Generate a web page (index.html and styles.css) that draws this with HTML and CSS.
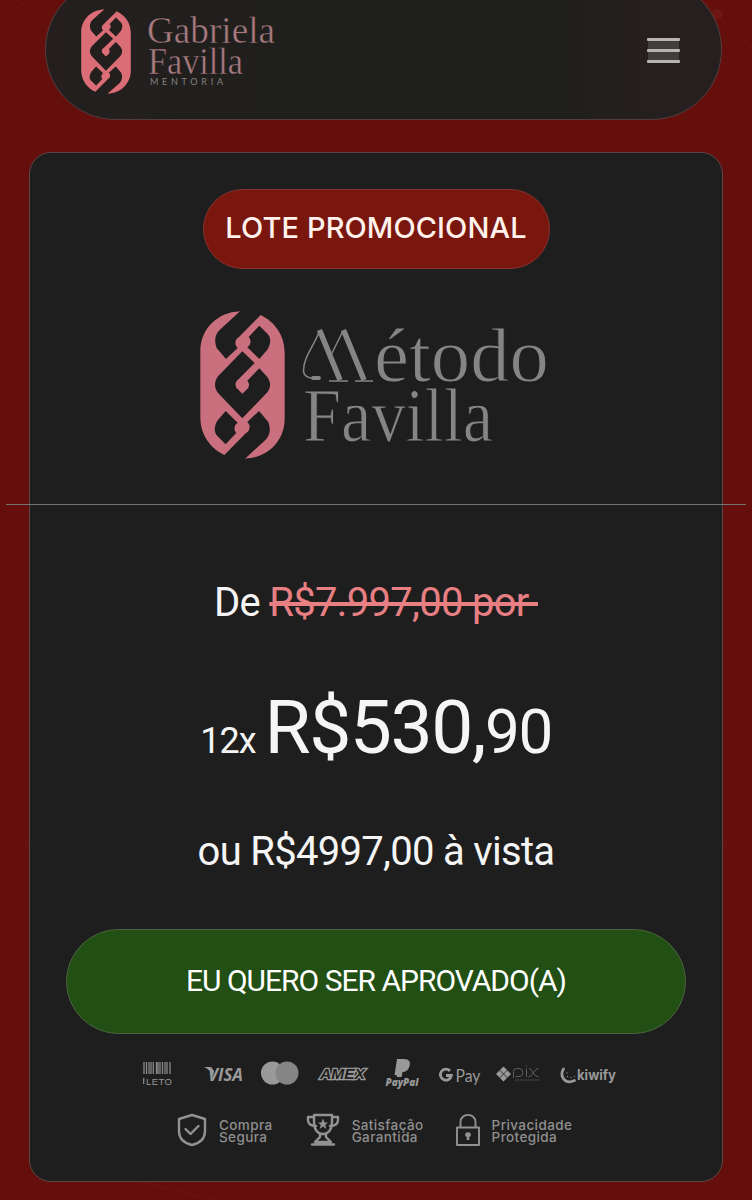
FILE: index.html
```html
<!DOCTYPE html>
<html lang="pt-BR">
<head>
  <meta charset="UTF-8">
  <title>Método Favilla</title>
  <link rel="stylesheet" href="styles.css">
</head>
<body>
  <svg class="page-lines" viewBox="0 0 752 1200" aria-hidden="true">
    <circle cx="717" cy="14" r="5"/>
    <path d="M720 18L752 48M0 805Q18 825 30 850M752 805Q734 825 722 850M0 1120L30 1136M140 1182L215 1200M0 18L30 0"/>
  </svg>

  <header class="navbar">
    <svg class="nav-emblem" viewBox="30 34 255 444" preserveAspectRatio="none">
      <path id="emblem" fill-rule="evenodd" d="M150 35C80 38 31 90 31 155V352C31 405 60 445 103 466L168 400A20 20 0 0 0 172 367L207 334L235 367C243 387 240 407 227 420L165 477C235 474 284 422 284 357V160C284 107 255 67 212 46L147 112A20 20 0 0 0 143 145L108 178L80 145C72 125 75 105 88 92ZM208 78L176 112A20 20 0 0 1 172 143L208 178L232 150C244 130 244 112 230 100ZM157 155L194 190L147 237A20 20 0 0 0 139 264L157 282L174 266A20 20 0 0 0 172 243L208 206L232 232C243 248 243 262 232 278L157 356L84 280C72 262 72 248 84 230ZM107 434L139 400A20 20 0 0 1 143 369L107 334L83 362C71 382 71 400 85 412Z"/>
    </svg>
    <svg class="nav-name" viewBox="145 10 135 80">
      <text class="nav-serif" x="147" y="43" textLength="128" lengthAdjust="spacingAndGlyphs">Gabriela</text>
      <text class="nav-serif" x="148" y="74" textLength="95" lengthAdjust="spacingAndGlyphs">Favilla</text>
      <text class="nav-sub" x="150" y="84.500" textLength="73">MENTORIA</text>
    </svg>
    <button class="menu-btn" aria-label="Menu"><span></span><span></span><span></span></button>
  </header>

  <main class="card">
    <div class="badge">LOTE PROMOCIONAL</div>

    <div class="logo">
      <svg class="logo-emblem" viewBox="30 34 255 444"><use href="#emblem"/></svg>
      <svg class="logo-name" viewBox="300 320 250 130">
        <path class="logo-m" d="M319 332C314 346 303 358 303.500 371Q304 379 318 378.500" fill="none" stroke-width="1.500"/>
        <path class="logo-m" d="M313 378H319" stroke-width="3.800" stroke-linecap="round"/>
        <path class="logo-m" d="M319.500 330L340 380M343.500 330L364 380" stroke-width="5.500"/>
        <path class="logo-m" d="M331 355L343 331M329 381H348M355 381H373" stroke-width="1.500"/>
        <text class="logo-serif" x="374" y="381" textLength="175" lengthAdjust="spacingAndGlyphs">étodo</text>
        <text class="logo-serif" x="303" y="441" textLength="190" lengthAdjust="spacingAndGlyphs">Favilla</text>
      </svg>
    </div>

    <hr class="divider">

    <p class="old-price">De <s>R$7.997,00 por&nbsp;</s></p>
    <p class="price"><span class="times">12x</span> <span class="value">R$530,</span><span class="cents">90</span></p>
    <p class="cash">ou R$4997,00 à vista</p>

    <a class="buy-btn" href="#">EU QUERO SER APROVADO(A)</a>

    <svg class="payments" viewBox="140 1055 480 40">
      <!-- boleto -->
      <path class="bars" d="M144 1062V1074M146.500 1062V1074M149 1062V1074M151 1062V1074M153.300 1062V1074M156.500 1062V1074M158 1062V1074M160 1062V1074M162.500 1062V1074M165 1062V1074M167 1062V1074M170 1062V1074"/>
      <path class="bars" d="M143.700 1078V1084"/>
      <text class="boleto" x="146" y="1085" textLength="26">LETO</text>
      <!-- visa -->
      <path d="M204 1067H211L214 1071L213 1077Q210 1069 204 1067Z"/>
      <text class="visa" x="208" y="1080.500" textLength="35" lengthAdjust="spacingAndGlyphs">VISA</text>
      <!-- mastercard -->
      <circle cx="272.500" cy="1073" r="11.500" fill="#999"/>
      <circle cx="287" cy="1073" r="11.500" fill="#858585"/>
      <!-- amex -->
      <text class="amex" x="320" y="1079" textLength="45" lengthAdjust="spacingAndGlyphs">AMEX</text>
      <!-- paypal -->
      <path d="M397 1059H404C409 1059 411 1062 409.500 1066C408.500 1070 406 1072 402.500 1072L401.500 1077H397L396.500 1075H394.500Z"/>
      <text class="paypal" x="385.500" y="1086" textLength="33" lengthAdjust="spacingAndGlyphs">PayPal</text>
      <!-- google pay -->
      <path d="M450 1071A5.500 5.500 0 1 0 451.300 1075.500H446" fill="none" stroke="#999" stroke-width="2.800"/>
      <text class="gpay" x="455.500" y="1081.500" textLength="25" lengthAdjust="spacingAndGlyphs">Pay</text>
      <!-- pix -->
      <path d="M503.500 1067.500L510 1074L503.500 1080.500L497 1074Z" stroke="#999" stroke-linejoin="round" stroke-width="1.500"/>
      <path d="M499.500 1070L507.500 1078M507.500 1070L499.500 1078" stroke="#1e1e1e" stroke-width=".8"/>
      <path class="pix" d="M513.500 1078V1071.500Q513.500 1068.500 516.500 1068.500H519Q523 1068.500 523 1072.500T519 1076.500H516M526.500 1068.500V1077M526.500 1065.500V1066.500M529 1068.500Q531 1068.500 533 1072.500T538.500 1077M538.500 1068.500Q536 1068.500 533.500 1072.500T528.500 1077"/>
      <path class="pix" d="M515 1080H539" stroke-dasharray="1.500 1"/>
      <!-- kiwify -->
      <path d="M563.500 1069C559 1076 565 1085 574.500 1080.500" fill="none" stroke="#999" stroke-width="2.800" stroke-linecap="round"/>
      <path d="M567 1072.500V1073.500M567.500 1076V1077M570.500 1077.500H571.500M574 1076.500H575" stroke="#999" stroke-width="1.200"/>
      <text class="kiwify" x="577" y="1080" textLength="39" lengthAdjust="spacingAndGlyphs">kiwify</text>
    </svg>

    <div class="trust">
      <div class="trust-item">
        <svg class="trust-icon" viewBox="0 0 32 34">
          <path d="M16 2L29 6V18Q29 29 16 32Q3 29 3 18V6ZM9.500 16L14.500 21L22.500 13"/>
        </svg>
        <span>Compra<br>Segura</span>
      </div>
      <div class="trust-item trophy">
        <svg class="trust-icon" viewBox="0 0 34 34">
          <path d="M8 2H26V9C26 17 22 21 17 21S8 17 8 9ZM8 4H2V7Q2 13 10 13M26 4H32V7Q32 13 24 13M14 21V24L9 29H25L20 24V21M6 31.500H28"/>
          <path class="star" d="M17 5.500L18.500 9.500H22L19.200 12L20.300 16L17 13.500L13.700 16L14.800 12L12 9.500H15.500Z"/>
        </svg>
        <span>Satisfação<br>Garantida</span>
      </div>
      <div class="trust-item lock">
        <svg class="trust-icon" viewBox="0 0 26 34">
          <path d="M2 14.500H24V32H2ZM5.500 14V9C5.500 -.500 20.500 -.500 20.500 9V14"/>
          <path class="star" d="M13 19.500A2.300 2.300 0 0 1 14.200 24L14.400 27H11.600L11.800 24A2.300 2.300 0 0 1 13 19.500Z"/>
        </svg>
        <span>Privacidade<br>Protegida</span>
      </div>
    </div>
  </main>
</body>
</html>
```
FILE: styles.css
```css
* {
  box-sizing: border-box;
}
body {
  margin: 0;
  height: 1200px;
  overflow: hidden;
  background-color: #640f0c;
  color: #f5f5f5;
  font-family: Roboto, sans-serif;
}
.page-lines {
  position: absolute;
  left: 0;
  top: 0;
  width: 752px;
  height: 1200px;
  z-index: -1;
  fill: #6f1714;
  stroke: #6b1613;
}
.page-lines path {
  fill: none;
}
.navbar {
  display: flex;
  align-items: flex-start;
  height: 141px;
  margin: -21px 30px 32px 45px;
  padding: 29px 41px 0 35px;
  border: 1px solid #51403f;
  border-radius: 71px;
  background: linear-gradient(90deg, #241f1e, #201f1d 25%, #1f1f1d 75%, #261f1f 90%);
}
.nav-emblem {
  width: 50px;
  height: 85px;
  fill: #da6d75;
}
.nav-name {
  width: 135px;
  height: 80px;
  margin: 1px 0 0 14px;
  overflow: visible;
}
.nav-serif {
  font: 38px "Liberation Serif", serif;
  fill: #a97b80;
  stroke: #211e1d;
  stroke-width: 0.5px;
}
.nav-sub {
  font: 9px Lato, sans-serif;
  fill: #858080;
}
.menu-btn {
  display: flex;
  flex-direction: column;
  justify-content: space-between;
  width: 33px;
  height: 25px;
  margin: 29px 0 0 auto;
  padding: 0;
  border: none;
  background: linear-gradient(#413e3d, #413e3d) center / 31px 23px no-repeat;
}
.menu-btn span {
  display: block;
  width: 33px;
  height: 3px;
  border-radius: 1px;
  background-color: #b7b4b2;
}
.card {
  display: flex;
  flex-direction: column;
  align-items: center;
  height: 1030px;
  margin: 0 29px 0 29px;
  padding-top: 36px;
  border: 1px solid #594645;
  border-radius: 22px;
  background-color: #1e1e1e;
}
.badge {
  width: 347px;
  height: 80px;
  border: 1px solid #883130;
  border-radius: 40px;
  background-color: #79170e;
  color: #fff1ec;
  font: 500 29px/76px Inter, sans-serif;
  letter-spacing: 0.1px;
  text-align: center;
  white-space: nowrap;
}
.logo {
  display: flex;
  width: 353px;
  height: 148px;
  margin-top: 42px;
}
.logo-emblem {
  width: 85px;
  height: 148px;
  fill: #c96f7e;
}
.logo-name {
  width: 250px;
  height: 130px;
  margin: 9px 0 0 15px;
  overflow: visible;
}
.logo-m {
  stroke: #858585;
}
.logo-serif {
  font: 77px "Liberation Serif", serif;
  fill: #858585;
  stroke: #1e1e1e;
  stroke-width: 1px;
}
.divider {
  align-self: stretch;
  height: 1px;
  margin: 45px -24px 0;
  border: none;
  background-color: #737373;
}
.old-price,
.price,
.cash {
  margin: 0;
  white-space: nowrap;
}
.old-price {
  margin-top: 73px;
  font-size: 40px;
  line-height: 50px;
  letter-spacing: -0.7px;
}
.old-price s {
  color: #e77f83;
}
.price {
  height: 90px;
  margin-top: 54px;
  line-height: 90px;
}
.times {
  margin-right: 5px;
  font-size: 36px;
  letter-spacing: -1px;
}
.value {
  font-size: 75px;
  letter-spacing: -1.5px;
}
.cents {
  font-size: 62px;
  letter-spacing: -1.5px;
}
.cash {
  margin-top: 55px;
  font-size: 40px;
  line-height: 50px;
  letter-spacing: -0.7px;
}
.buy-btn {
  width: 620px;
  height: 105px;
  margin-top: 52px;
  border: 1px solid #4c6540;
  border-radius: 53px;
  background-color: #224f13;
  color: #fff;
  font-size: 30px;
  line-height: 101px;
  letter-spacing: -1px;
  text-align: center;
  text-decoration: none;
}
.payments {
  width: 480px;
  height: 40px;
  margin-top: 21px;
  margin-left: 8px;
  fill: #999;
}
.bars {
  stroke: #888;
  stroke-width: 1.3px;
}
.boleto {
  font: 9.5px "Liberation Sans", sans-serif;
}
.visa {
  font: italic bold 18px "Open Sans", sans-serif;
}
.amex {
  font: italic bold 15px "Liberation Sans", sans-serif;
  fill: #1e1e1e;
  stroke: #999;
  stroke-width: 2.6px;
  paint-order: stroke;
}
.paypal {
  font: italic 800 10px "Open Sans", sans-serif;
}
.gpay {
  font: 17px Lato, sans-serif;
}
.pix {
  fill: none;
  stroke: #656565;
  stroke-width: 0.9px;
}
.kiwify {
  font: 700 14px Inter, sans-serif;
}
.trust {
  display: flex;
  width: 400px;
  margin-top: 18px;
}
.trust-item {
  display: flex;
  align-items: center;
  gap: 11px;
  color: #8f8f8f;
  font: 500 13.5px/12px Inter, sans-serif;
  letter-spacing: 0.4px;
  white-space: nowrap;
}
.trust-item span {
  padding-top: 1px;
}
.trust-icon {
  flex: none;
  width: 32px;
  height: 34px;
  fill: none;
  stroke: #929292;
  stroke-width: 2.4px;
  stroke-linejoin: round;
  stroke-linecap: round;
}
.trophy {
  margin-left: 32px;
}
.trophy .trust-icon {
  width: 36px;
}
.lock {
  margin-left: 31px;
}
.lock .trust-icon {
  width: 26px;
  stroke-width: 1.9px;
}
.trust-icon .star {
  fill: #929292;
  stroke: none;
}
```
